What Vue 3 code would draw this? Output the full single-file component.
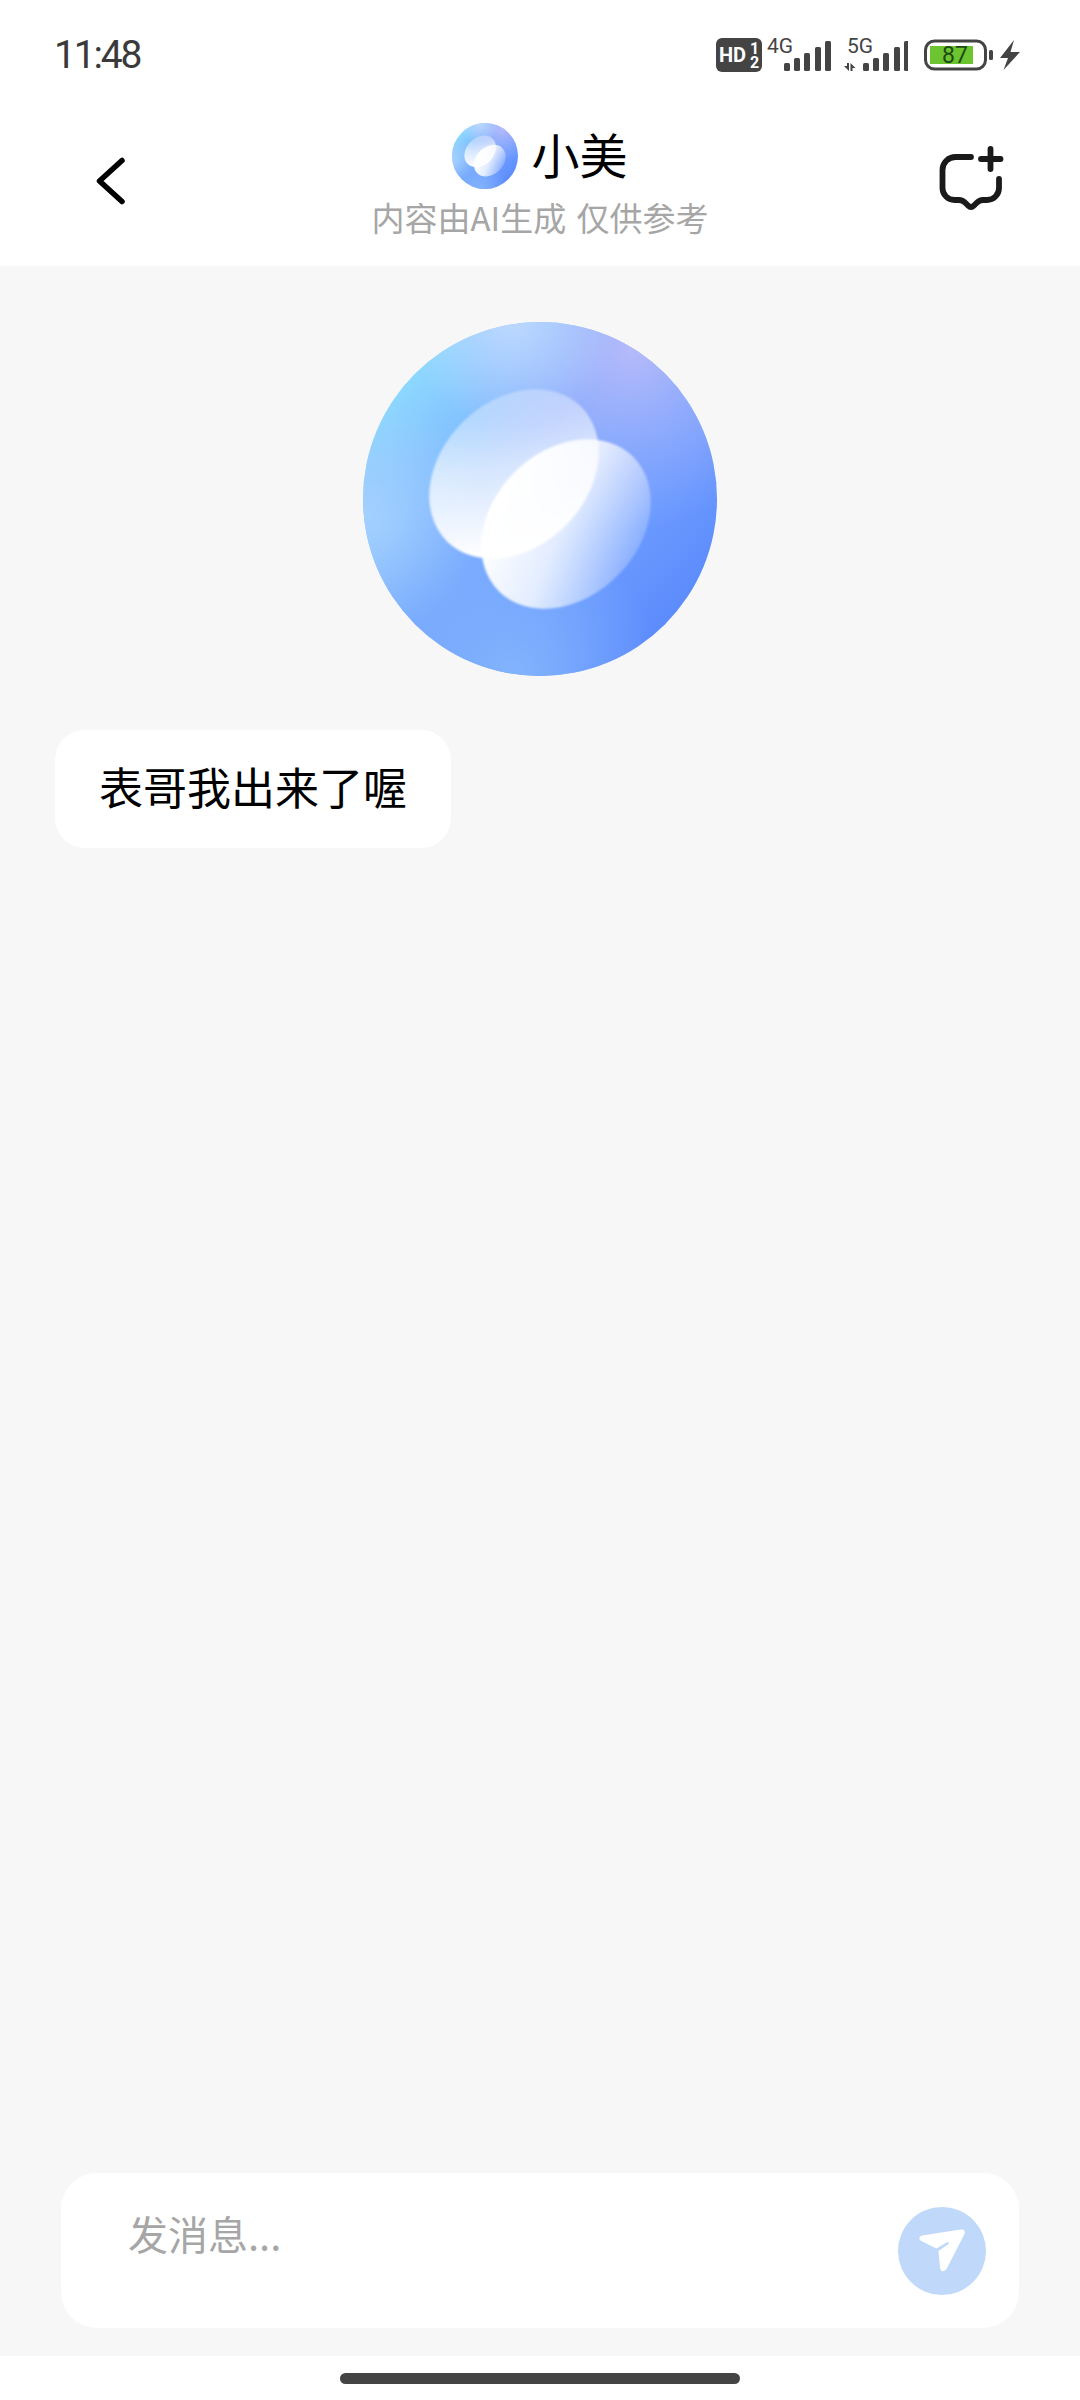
<script setup>
const chatTitle = '小美'
const disclaimer = '内容由AI生成 仅供参考'
const messages = ['表哥我出来了喔']
const signalBars = [
  { x: 0, y: 22, h: 8 },
  { x: 10, y: 17, h: 13 },
  { x: 20, y: 12, h: 18 },
  { x: 31, y: 6, h: 24 },
  { x: 41, y: 0, h: 30 }
]
</script>

<template>
  <div class="phone">
    <div class="status-bar">
      <span class="status-time">11:48</span>
      <div class="status-icons">
        <svg class="ic-hd" width="46" height="34" viewBox="0 0 46 34">
          <rect width="46" height="34" rx="6" fill="#444" />
          <text x="3" y="24" class="hd-text">HD</text>
          <text x="34" y="16" class="hd-sub">1</text>
          <text x="34" y="30" class="hd-sub">2</text>
        </svg>
        <svg class="ic-net" width="64" height="44" viewBox="0 0 64 44">
          <text x="0" y="20" class="net-text">4G</text>
          <g transform="translate(17 8)">
            <rect v-for="b in signalBars" :key="b.x" :x="b.x" :y="b.y" width="6" :height="b.h" rx="1.5" fill="#444" />
          </g>
        </svg>
        <svg class="ic-net5" width="64" height="44" viewBox="0 0 64 44">
          <text x="3" y="20" class="net-text">5G</text>
          <path d="M5 38 L0 33 H3 V30 H5 Z M6.5 30 L11.5 35 H8.5 V38 H6.5 Z" fill="#444" />
          <g transform="translate(19 8)">
            <rect v-for="b in signalBars" :key="b.x" :x="b.x" :y="b.y" width="6" :height="b.h" rx="1.5" fill="#444" />
          </g>
        </svg>
        <svg class="ic-battery" width="70" height="32" viewBox="0 0 70 32">
          <rect x="1.5" y="2" width="60" height="28" rx="9" fill="none" stroke="#444" stroke-width="3" />
          <rect x="6" y="7" width="43" height="18" fill="#6cc431" />
          <text x="31" y="24" text-anchor="middle" class="batt-text">87</text>
          <rect x="65" y="11" width="4" height="10" rx="1.5" fill="#444" />
        </svg>
        <svg class="ic-bolt" width="20" height="30" viewBox="0 0 20 30">
          <path d="M14 0 L0 18 H8 L3.5 30 L20 12 H10.5 Z" fill="#444" />
        </svg>
      </div>
    </div>

    <header class="chat-header">
      <svg class="back-icon" width="40" height="60" viewBox="0 0 40 60">
        <path d="M32 9.5 L9.5 30 L32 50.5" fill="none" stroke="#000" stroke-width="5.5" stroke-linecap="round" stroke-linejoin="round" />
      </svg>
      <div class="chat-title">
        <div class="title-row">
          <svg class="mini-logo" width="66" height="66" viewBox="0 0 354 354">
            <use href="#assistant-logo" />
          </svg>
          <span class="title-name">{{ chatTitle }}</span>
        </div>
        <div class="title-sub">{{ disclaimer }}</div>
      </div>
      <svg class="new-chat-icon" width="100" height="100" viewBox="0 0 100 100">
        <g fill="none" stroke="#1a1a1a" stroke-width="5.8" stroke-linecap="round" stroke-linejoin="round">
          <path d="M51 26 H35.5 A13 13 0 0 0 22.5 39 V57 A12 12 0 0 0 34.5 69 H39 C42 69 43.5 70 45.5 72 L48 74.5 C50 76.5 52 76.5 54 74.5 L56.5 72 C58.5 70 60 69 63 69 H67 A12 12 0 0 0 79 57 V48" />
          <path d="M61 28 H80.5 M70.5 18 V38" />
        </g>
      </svg>
    </header>

    <main class="chat-body">
      <svg class="hero-logo" width="354" height="354" viewBox="0 0 354 354">
        <defs>
          <clipPath id="logo-clip"><circle cx="177" cy="177" r="177" /></clipPath>
          <linearGradient id="logo-base" x1="0.12" y1="0.12" x2="0.88" y2="0.86">
            <stop offset="0" stop-color="#8edcff" />
            <stop offset="0.36" stop-color="#7db0fd" />
            <stop offset="0.72" stop-color="#6c9cff" />
            <stop offset="1" stop-color="#5b8afc" />
          </linearGradient>
          <radialGradient id="logo-lav" cx="0.76" cy="0.08" r="0.5">
            <stop offset="0" stop-color="#b6bafa" />
            <stop offset="1" stop-color="#98a8fc" stop-opacity="0" />
          </radialGradient>
          <radialGradient id="logo-left" cx="0" cy="0.55" r="0.34">
            <stop offset="0" stop-color="#a4d0ff" />
            <stop offset="1" stop-color="#a4d0ff" stop-opacity="0" />
          </radialGradient>
          <radialGradient id="logo-top" cx="0.42" cy="0" r="0.3">
            <stop offset="0" stop-color="#bcd8ff" />
            <stop offset="1" stop-color="#bcd8ff" stop-opacity="0" />
          </radialGradient>
          <radialGradient id="logo-bottom" cx="0.42" cy="1" r="0.42">
            <stop offset="0" stop-color="#82b4fd" />
            <stop offset="1" stop-color="#82b4fd" stop-opacity="0" />
          </radialGradient>
          <linearGradient id="leaf-a" gradientUnits="userSpaceOnUse" x1="205" y1="75" x2="110" y2="215">
            <stop offset="0" stop-color="#fff" stop-opacity="0.22" />
            <stop offset="0.5" stop-color="#fff" stop-opacity="0.68" />
            <stop offset="1" stop-color="#fff" stop-opacity="1" />
          </linearGradient>
          <linearGradient id="leaf-b" gradientUnits="userSpaceOnUse" x1="170" y1="140" x2="225" y2="280">
            <stop offset="0" stop-color="#fff" stop-opacity="1" />
            <stop offset="0.45" stop-color="#fff" stop-opacity="0.8" />
            <stop offset="1" stop-color="#fff" stop-opacity="0.2" />
          </linearGradient>
          <filter id="leaf-soft" x="-10%" y="-10%" width="120%" height="120%">
            <feGaussianBlur stdDeviation="0.8" />
          </filter>
          <g id="assistant-logo">
            <g clip-path="url(#logo-clip)">
              <rect width="354" height="354" fill="url(#logo-base)" />
              <rect width="354" height="354" fill="url(#logo-lav)" />
              <rect width="354" height="354" fill="url(#logo-top)" />
              <rect width="354" height="354" fill="url(#logo-left)" />
              <rect width="354" height="354" fill="url(#logo-bottom)" />
            </g>
            <g filter="url(#leaf-soft)">
              <ellipse cx="151" cy="152" rx="95" ry="73" transform="rotate(-45 151 152)" fill="url(#leaf-a)" />
              <ellipse cx="203" cy="202" rx="95" ry="73" transform="rotate(-45 203 202)" fill="url(#leaf-b)" />
            </g>
          </g>
        </defs>
        <use href="#assistant-logo" />
      </svg>

      <div v-for="msg in messages" :key="msg" class="bubble">{{ msg }}</div>
    </main>

    <div class="composer">
      <span class="composer-placeholder">发消息...</span>
      <div class="send-btn">
        <svg width="54" height="54" viewBox="0 0 54 54">
          <path d="M5.5 16.5 C3.5 14.5 4.5 12 7.5 11.5 L45.5 5.5 C49 5 50.5 7 49.5 10 L32 44 C29.5 48.5 25.5 48 25 43.5 L23.5 27 L33.5 20 C34.5 19 33.5 17.5 32 18.2 L21.5 24.5 Z" fill="#fff" />
        </svg>
      </div>
    </div>

    <div class="home-area"><span class="home-bar"></span></div>
  </div>
</template>

<style scoped>
.phone {
  display: flex;
  flex-direction: column;
  width: 1080px;
  height: 2400px;
  overflow: hidden;
  background: #f7f7f7;
  font-family: "Noto Sans CJK SC", "Noto Sans", sans-serif;
}

.status-bar {
  display: flex;
  justify-content: space-between;
  align-items: center;
  height: 110px;
  padding: 0 60px 0 54px;
  background: #fff;
  box-sizing: border-box;
}

.status-time {
  font-family: Roboto, sans-serif;
  font-size: 39px;
  letter-spacing: -2.2px;
  color: #3a3a3a;
}

.status-icons {
  display: flex;
  align-items: center;
}

.ic-hd {
  margin-right: 5px;
}

.ic-net {
  margin-right: 13px;
}

.ic-net5 {
  margin-right: 16px;
}

.ic-battery {
  margin-right: 6px;
}

.hd-text {
  font: 700 20px Roboto, sans-serif;
  fill: #fff;
}

.hd-sub {
  font: 700 16px Roboto, sans-serif;
  fill: #fff;
}

.net-text {
  font: 400 21px Roboto, sans-serif;
  fill: #444;
}

.batt-text {
  font: 400 23px Roboto, sans-serif;
  fill: #1d4a12;
}

.chat-header {
  display: grid;
  grid-template-columns: 1fr auto 1fr;
  align-items: center;
  height: 156px;
  padding: 0 60px 14px;
  background: #fff;
  box-sizing: border-box;
}

.back-icon {
  margin-left: 30px;
}

.new-chat-icon {
  justify-self: end;
}

.chat-title {
  display: flex;
  flex-direction: column;
  align-items: center;
}

.title-row {
  display: flex;
  align-items: center;
  gap: 13px;
}

.title-name {
  padding-bottom: 6px;
  font-size: 48px;
  line-height: 60px;
  color: #000;
}

.title-sub {
  margin-top: 6px;
  font-size: 33px;
  line-height: 44px;
  word-spacing: 3px;
  color: #a6a6a6;
  white-space: nowrap;
}

.chat-body {
  flex: 1;
  display: flex;
  flex-direction: column;
  padding: 56px 55px 0;
}

.hero-logo {
  align-self: center;
  flex: none;
}

.bubble {
  align-self: flex-start;
  margin-top: 54px;
  padding: 0 44px 6px;
  font-size: 44px;
  line-height: 112px;
  color: #000;
  background: #fff;
  border-radius: 30px;
}

.composer {
  display: flex;
  justify-content: space-between;
  height: 155px;
  margin: 0 61px 28px;
  padding: 34px 33px 0 67px;
  background: #fff;
  border-radius: 36px;
  box-sizing: border-box;
}

.composer-placeholder {
  margin-top: -3px;
  font-size: 40px;
  line-height: 58px;
  color: #a6a6a6;
}

.send-btn {
  display: flex;
  justify-content: center;
  align-items: center;
  width: 88px;
  height: 88px;
  border-radius: 50%;
  background: #c0d9fb;
}

.home-area {
  display: flex;
  justify-content: center;
  height: 44px;
  padding-top: 17px;
  background: #fff;
  box-sizing: border-box;
}

.home-bar {
  width: 400px;
  height: 11px;
  border-radius: 6px;
  background: #444;
}
</style>
